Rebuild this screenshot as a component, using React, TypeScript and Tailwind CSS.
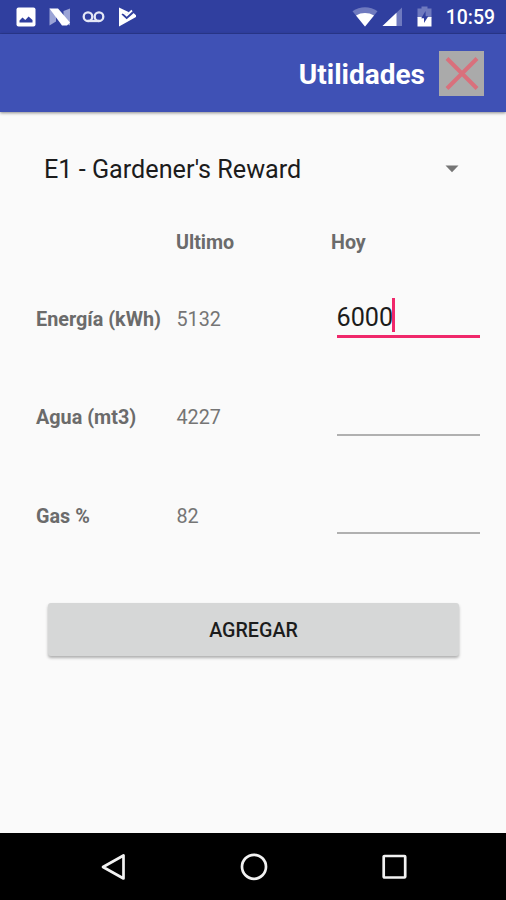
import { useState } from "react"

interface Reading {
  id: string
  label: string
  last: number
}

const READINGS: Reading[] = [
  { id: "energia", label: "Energía (kWh)", last: 5132 },
  { id: "agua", label: "Agua (mt3)", last: 4227 },
  { id: "gas", label: "Gas %", last: 82 },
]

export default function App() {
  const [focused, setFocused] = useState("energia")
  const values: Record<string, string> = { energia: "6000", agua: "", gas: "" }

  return (
    <div className="flex h-[900px] w-[506px] flex-col overflow-hidden bg-[#fafafa] font-['Roboto',sans-serif]">
      <StatusBar />

      <header className="z-10 flex h-[78px] shrink-0 items-center justify-end bg-[#3f51b5] pr-[22px] shadow-[0_1px_3px_rgba(0,0,0,0.45)]">
        <h1 className="mr-[14px] pt-[3px] text-[28px] leading-8 font-bold text-white">Utilidades</h1>
        <button className="flex h-[45px] w-[45px] items-center justify-center bg-[#aaaaaa]">
          <svg width="45" height="45" viewBox="0 0 45 45" fill="none">
            <path d="M8 7.5L38 37.5M38 7.5L8 37.5" stroke="#d9707c" strokeWidth="4" />
          </svg>
        </button>
      </header>

      <main className="flex flex-1 flex-col">
        <div className="mt-[37px] flex h-10 items-center justify-between pr-[47px] pl-[44px]">
          <span className="pt-[1px] text-[25.2px] text-[#1c1c1c]">E1 - Gardener's Reward</span>
          <svg width="14" height="8" viewBox="0 0 14 8">
            <path d="M0.5 0.5H13.5L7 7.3Z" fill="#757575" />
          </svg>
        </div>

        <div className="mt-[38px] grid h-[30px] grid-cols-[140px_155px_1fr] items-center pt-px pl-[36px] text-[19.7px] font-bold text-[#6b6b6b]">
          <span />
          <span>Ultimo</span>
          <span>Hoy</span>
        </div>

        <div className="mt-[13px]">
          {READINGS.map((reading) => (
            <div
              key={reading.id}
              className="grid h-[98.4px] grid-cols-[140.5px_160px_143px] items-center pl-[36px] text-[19.8px] text-[#757575]"
            >
              <span className="pt-[1.5px] font-bold whitespace-nowrap text-[#6b6b6b]">{reading.label}</span>
              <span className="pt-[1.5px]">{reading.last}</span>
              <Field
                value={values[reading.id]}
                active={focused === reading.id}
                onFocus={() => setFocused(reading.id)}
              />
            </div>
          ))}
        </div>

        <button className="mr-[47px] ml-[48px] mt-[38px] h-[53px] rounded-[3px] bg-[#d6d7d7] pt-[2px] text-[19.7px] font-medium text-[#1c1c1c] shadow-[0_2px_3px_rgba(0,0,0,0.3)]">
          AGREGAR
        </button>
      </main>

      <NavBar />
    </div>
  )
}

function Field({ value, active, onFocus }: { value: string; active: boolean; onFocus: () => void }) {
  return (
    <div
      onClick={onFocus}
      className={`mb-[4px] flex h-[41px] text-[25.2px] leading-[41px] text-[#1c1c1c] ${
        active ? "border-b-[3px] border-[#f0286b]" : "border-b-2 border-[#b0b0b0]"
      }`}
    >
      <span>{value}</span>
      {active && <span className="mt-px -ml-px h-[34px] w-[2.5px] bg-[#f0286b]" />}
    </div>
  )
}

function StatusBar() {
  return (
    <div className="flex h-[34px] shrink-0 items-center justify-between border-b border-[#2b3990] bg-[#303f9f] pr-[11px] pl-[16px]">
      <div className="flex items-center pt-px">
        {/* screenshot */}
        <svg width="20" height="20" viewBox="0 0 20 20">
          <rect x="0.5" y="0.5" width="19" height="19" rx="2" fill="#fff" />
          <path d="M3.5 15.5V13.5L6.5 10.5L9.3 13L12.6 9.5L16.5 13V15.5Z" fill="#303f9f" />
        </svg>
        {/* nougat */}
        <svg className="ml-[13px]" width="22" height="20" viewBox="0 0 22 20">
          <path d="M0.5 1.5L7 3.5V14.5L0.5 18.5Z" fill="#9aa3d6" />
          <path d="M21 1.5L14.5 4V15L21 18.5Z" fill="#9aa3d6" />
          <path d="M0.5 1.5H9L21 15.5L18 18.5H13Z" fill="#fff" />
        </svg>
        {/* voicemail */}
        <svg className="ml-[11px]" width="23" height="12" viewBox="0 0 23 12" fill="none" stroke="#e4e7f6" strokeWidth="2.3">
          <circle cx="6" cy="5.7" r="4.3" />
          <circle cx="17" cy="5.7" r="4.3" />
          <path d="M6 10H17" />
        </svg>
        {/* play store update */}
        <svg className="ml-[13px]" width="19" height="20" viewBox="0 0 19 20">
          <path d="M1 0.5L11 5.2L8.7 7.6L6.8 5.7L4.8 7.5L8.7 11.4L14.8 5.3L18 8.3V10L1 19.5Z" fill="#fff" />
          <path d="M4 7L8.7 11.2L17.5 3.4" stroke="#303f9f" strokeWidth="1.5" fill="none" />
          <path d="M5.5 5.5L8.7 8.5L14 3.5" stroke="#fff" strokeWidth="1.8" fill="none" />
        </svg>
      </div>

      <div className="flex items-center">
        <svg width="26" height="20" viewBox="0 0 26 20">
          <path d="M0.5 4.2C8 -1.2 18 -1.2 25.5 4.2L13 19.5Z" fill="#6f7abf" />
          <path d="M4 8.5C9.5 5.2 16.5 5.2 22 8.5L13 19.5Z" fill="#fff" />
        </svg>
        <svg className="ml-[4px]" width="21" height="20" viewBox="0 0 21 20">
          <path d="M20 0.5V19H0.5Z" fill="#6f7abf" />
          <path d="M14.5 5.7V19H0.5Z" fill="#fff" />
        </svg>
        <svg className="ml-[14px]" width="15" height="21" viewBox="0 0 15 21">
          <path d="M4.5 0.5H10.5V2.5H14.5V12H0.5V2.5H4.5Z" fill="#6f7abf" />
          <path d="M0.5 11H14.5V20.5H0.5Z" fill="#fff" />
          <path d="M8.6 5L4.2 12.2H7V17L11.3 10.2H8.6Z" fill="#303f9f" />
        </svg>
        <span className="ml-[14px] pt-[3px] text-[19.4px] leading-6 font-medium text-white">10:59</span>
      </div>
    </div>
  )
}

function NavBar() {
  return (
    <nav className="flex h-[67px] shrink-0 items-center justify-between bg-black pr-[97px] pl-[100px]">
      <svg width="26" height="30" viewBox="0 0 26 30" fill="none" stroke="#f2f2f2" strokeWidth="2.7">
        <path d="M23.5 3.5V26.5L3 15Z" strokeLinejoin="round" />
      </svg>
      <svg width="30" height="30" viewBox="0 0 30 30" fill="none" stroke="#f2f2f2" strokeWidth="2.7">
        <circle cx="15" cy="14.8" r="12" />
      </svg>
      <svg width="28" height="28" viewBox="0 0 28 28" fill="none" stroke="#f2f2f2" strokeWidth="2.7">
        <rect x="2.7" y="3" width="21.5" height="21.5" rx="0.8" />
      </svg>
    </nav>
  )
}
